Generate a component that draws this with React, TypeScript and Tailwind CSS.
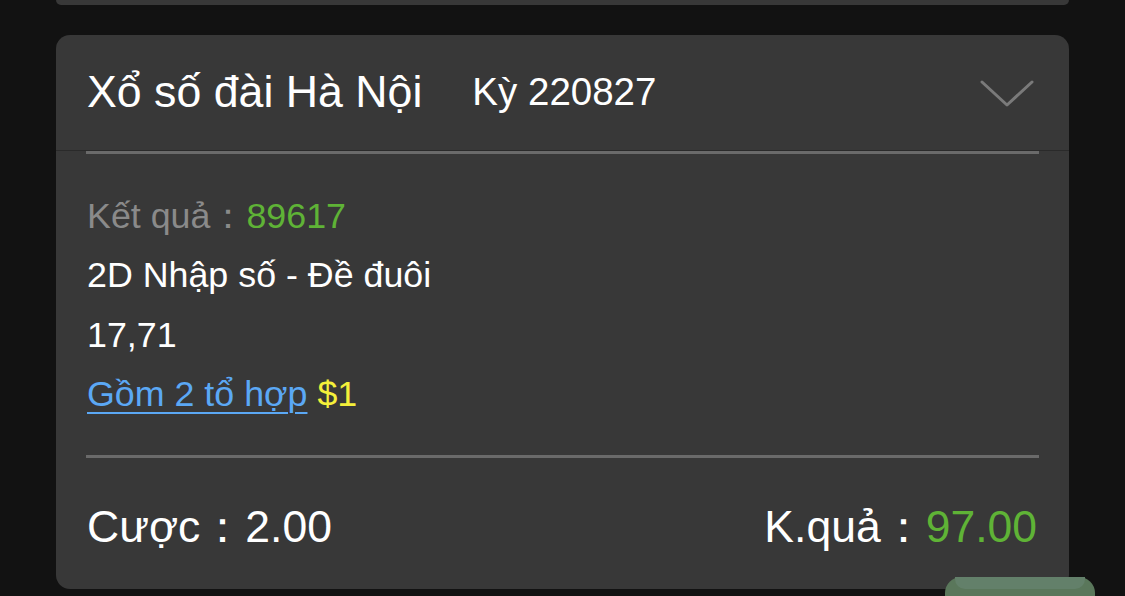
import React from "react";

export default function App() {
  return (
    <div
      className="relative w-[1125px] h-[596px] overflow-hidden bg-[#121212] text-white"
      style={{ fontFamily: '"Liberation Sans", Arial, sans-serif' }}
    >
      <div className="pl-[56px] pr-[56px] flex flex-col gap-[30px]">
        <div className="h-[5px] rounded-b-[14px] bg-[#383838]" />
        <div className="rounded-[14px] bg-[#383838] overflow-hidden">
          <div className="h-[116px] flex items-center pl-[31px] pr-[34px] border-b border-[#2a2a2a]">
            <span className="text-[44.7px] leading-none">Xổ số đài Hà Nội</span>
            <span className="ml-[50px] text-[38.5px] leading-none">Kỳ 220827</span>
            <div className="ml-auto">
              <svg width="56" height="32" viewBox="0 0 56 32" fill="none">
                <polyline
                  points="3,5 28,28 53,5"
                  stroke="#7a7a7a"
                  strokeWidth="3"
                  strokeLinecap="round"
                  strokeLinejoin="round"
                />
              </svg>
            </div>
          </div>
          <div className="mx-[30px] h-[3px] bg-[#6a6a6a]" />
          <div className="px-[31px] pt-[33px] pb-[31px] text-[35.8px] leading-[59.3px]">
            <div>
              <span className="text-[#8a8a8a]">Kết quả：</span>
              <span className="text-[#5fb336]">89617</span>
            </div>
            <div>2D Nhập số - Đề đuôi</div>
            <div>17,71</div>
            <div>
              <span className="text-[#5ba8f5] underline underline-offset-[6px] decoration-[2px]">Gồm 2 tổ hợp</span>{" "}
              <span className="text-[#f4ef3a]">$1</span>
            </div>
          </div>
          <div className="mx-[30px] h-[3px] bg-[#6a6a6a]" />
          <div className="h-[131px] flex items-center justify-between pl-[31px] pr-[32px] pt-[8px] text-[44.5px] leading-none">
            <span>Cược：2.00</span>
            <span>
              K.quả：<span className="text-[#5fb336]">97.00</span>
            </span>
          </div>
        </div>
      </div>
      <div className="absolute left-[945px] top-[577px] w-[150px] h-[60px] rounded-[16px] bg-[#5a775b]">
        <div className="mx-[10px] mt-[0px] h-[12px] rounded-b-[10px] bg-[#63806a]" />
      </div>
    </div>
  );
}
